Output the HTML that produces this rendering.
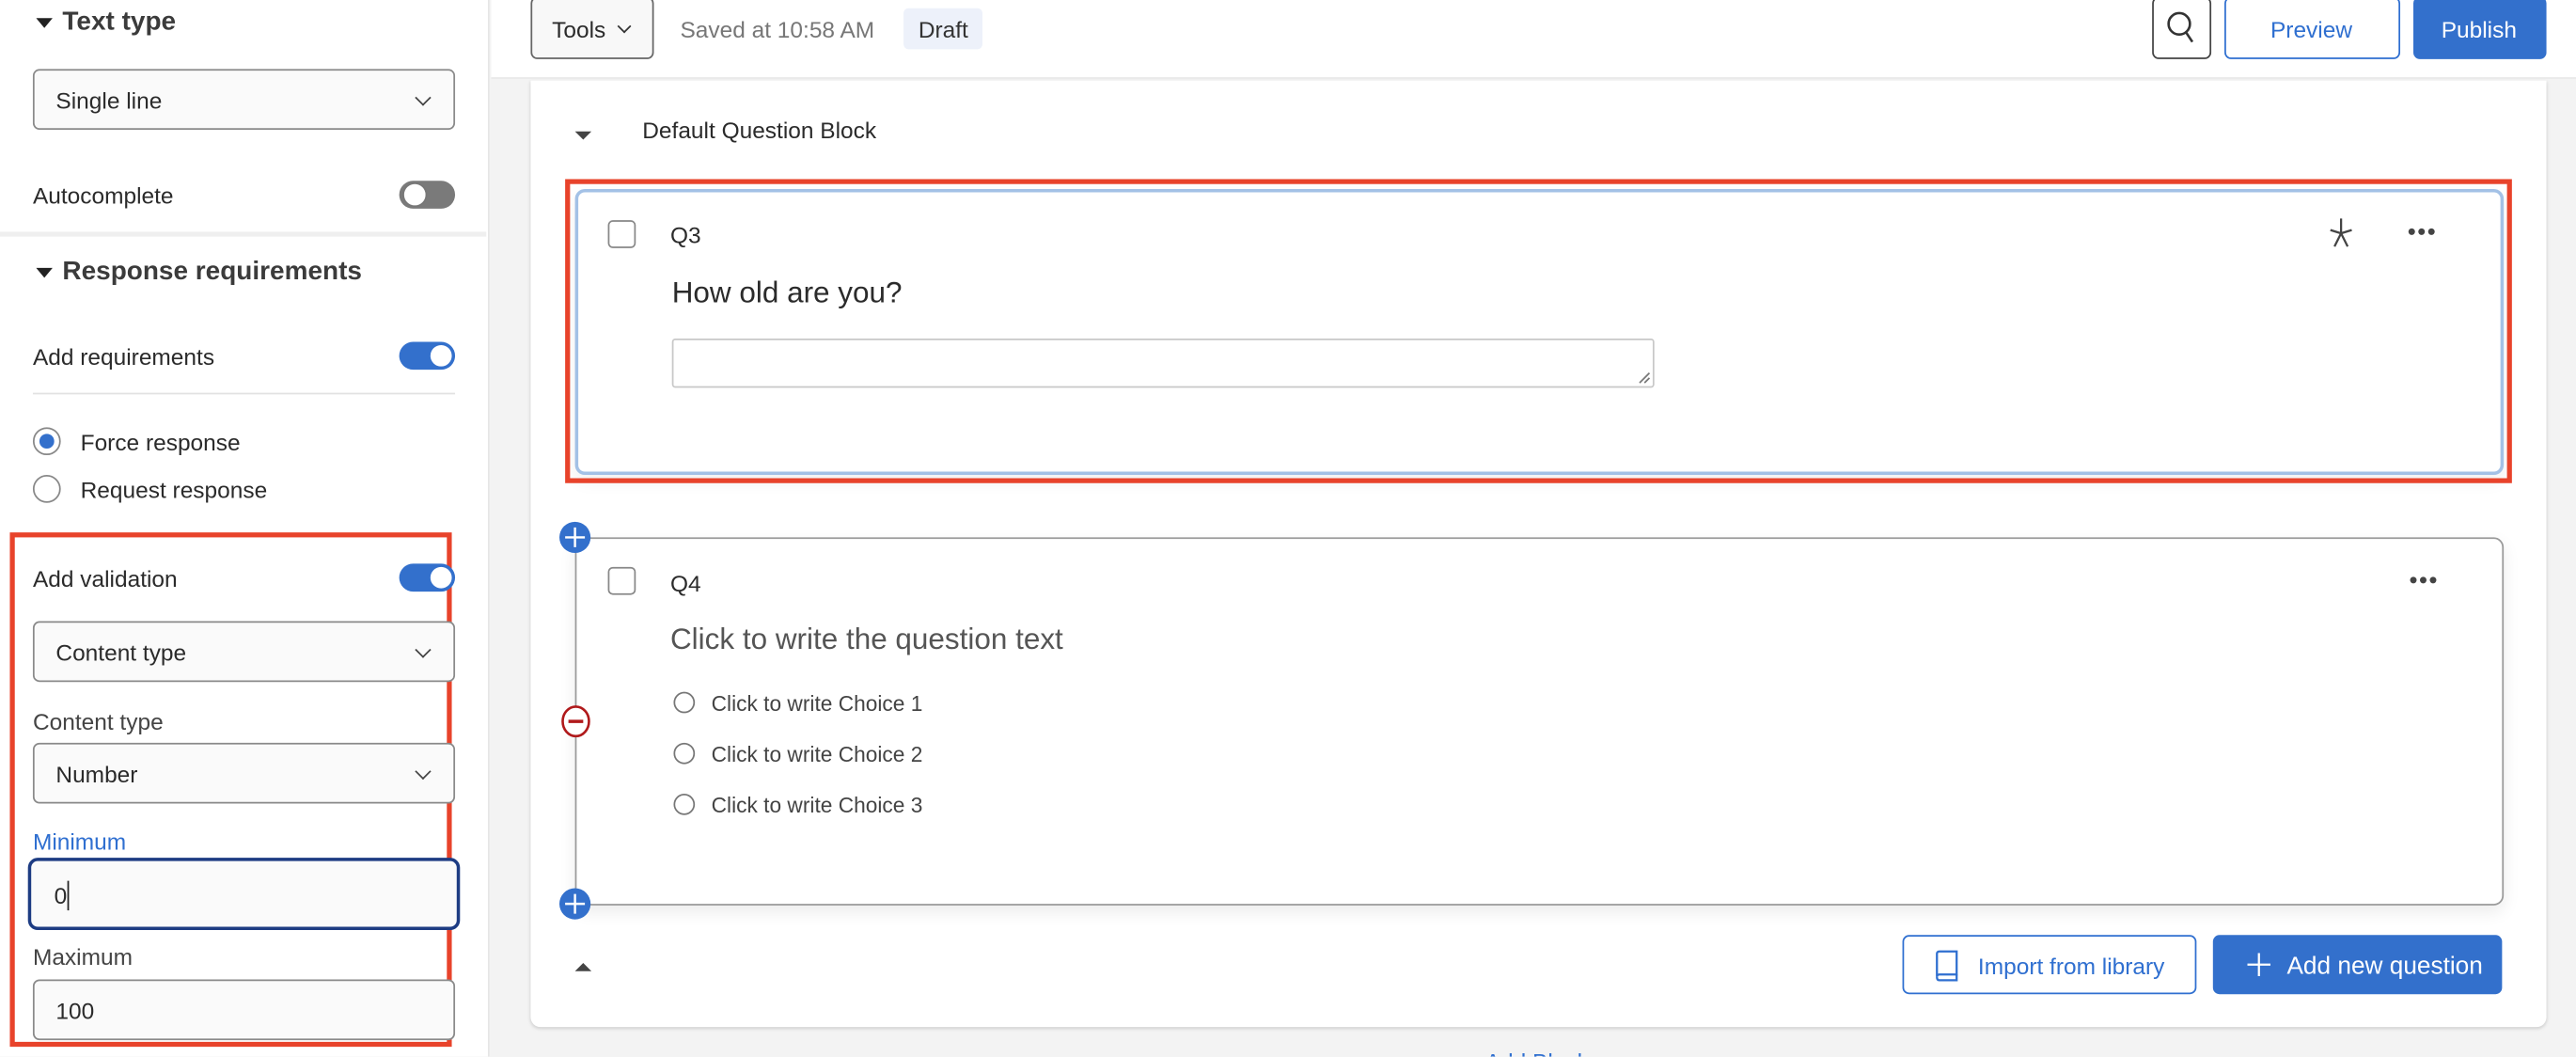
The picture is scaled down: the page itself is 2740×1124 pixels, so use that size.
<!DOCTYPE html>
<html><head><meta charset="utf-8">
<style>
*{box-sizing:border-box;margin:0;padding:0}
html,body{width:2740px;height:1124px;overflow:hidden;background:#f3f3f3;font-family:"Liberation Sans",Arial,sans-serif;color:#333}
#w{position:absolute;left:0;top:0;width:1568px;height:643px;transform:scale(1.74745);transform-origin:0 0;overflow:hidden;background:#f3f3f3}
.a{position:absolute}
.t{position:absolute;white-space:nowrap;line-height:1;transform:translateY(-50%)}
.sel{position:absolute;background:#fafafa;border:1px solid #8a8a8a;border-radius:4px}
.sel span{position:absolute;left:13px;top:50%;transform:translateY(-50%);font-size:14px;color:#2b2b2b}
.chev{position:absolute;right:15px;top:50%;width:7px;height:7px;margin-top:-5px;border-right:1.2px solid #444;border-bottom:1.2px solid #444;transform:rotate(45deg)}
.tog{position:absolute;width:34px;height:17px;border-radius:9px}
.tog i{position:absolute;top:2px;width:13px;height:13px;border-radius:50%;background:#fff}
.on{background:#3370cc}.on i{right:2px}
.off{background:#7a7a7a}.off i{left:2px;top:1px;width:15px;height:15px;border:1px solid #777}
.rad{position:absolute;width:17px;height:17px;border-radius:50%;border:1px solid #888;background:#fff}
.cb{position:absolute;width:17px;height:17px;border:1px solid #888;border-radius:3px;background:#fff}
.cr{position:absolute;width:13px;height:13px;border-radius:50%;border:1px solid #777;background:#fff}
.dots{position:absolute;width:18px;height:4px}
.dots b{position:absolute;top:0;width:4px;height:4px;border-radius:50%;background:#444}
</style></head><body><div id="w">

<div class="a" style="left:0;top:0;width:298px;height:643px;background:#fff;border-right:1px solid #e6e6e6"></div>
<div class="a" style="left:22px;top:11px;width:0;height:0;border-left:5px solid transparent;border-right:5px solid transparent;border-top:6px solid #222"></div>
<div class="t" style="left:38px;top:14px;font-size:16px;font-weight:bold;color:#3b3b3b">Text type</div>
<div class="sel" style="left:20px;top:42px;width:257px;height:37px"><span>Single line</span><div class="chev"></div></div>
<div class="t" style="left:20px;top:119px;font-size:14px;color:#2b2b2b">Autocomplete</div>
<div class="tog off" style="left:243px;top:110px"><i></i></div>
<div class="a" style="left:0;top:141px;width:296px;height:3px;background:#efefef"></div>
<div class="a" style="left:22px;top:163px;width:0;height:0;border-left:5px solid transparent;border-right:5px solid transparent;border-top:6px solid #222"></div>
<div class="t" style="left:38px;top:166px;font-size:16px;font-weight:bold;color:#3b3b3b">Response requirements</div>
<div class="t" style="left:20px;top:217px;font-size:14px;color:#2b2b2b">Add requirements</div>
<div class="tog on" style="left:243px;top:208px"><i></i></div>
<div class="a" style="left:20px;top:239px;width:257px;height:1px;background:#e2e2e2"></div>
<div class="rad" style="left:20px;top:260px"></div>
<div class="a" style="left:24px;top:264px;width:9px;height:9px;border-radius:50%;background:#3370cc"></div>
<div class="t" style="left:49px;top:269px;font-size:14px;color:#2b2b2b">Force response</div>
<div class="rad" style="left:20px;top:289px"></div>
<div class="t" style="left:49px;top:298px;font-size:14px;color:#2b2b2b">Request response</div>

<div class="a" style="left:6px;top:324px;width:269px;height:313px;border:3px solid #e8432b"></div>
<div class="t" style="left:20px;top:352px;font-size:14px;color:#2b2b2b">Add validation</div>
<div class="tog on" style="left:243px;top:343px"><i></i></div>
<div class="sel" style="left:20px;top:378px;width:257px;height:37px"><span>Content type</span><div class="chev"></div></div>
<div class="t" style="left:20px;top:439px;font-size:14px;color:#444">Content type</div>
<div class="sel" style="left:20px;top:452px;width:257px;height:37px"><span>Number</span><div class="chev"></div></div>
<div class="t" style="left:20px;top:512px;font-size:14px;color:#2f6fd0">Minimum</div>
<div class="a" style="left:17px;top:522px;width:263px;height:44px;border:2px solid #1d3c83;border-radius:6px;background:#fafafa"></div>
<div class="t" style="left:33px;top:545px;font-size:14px;color:#2b2b2b">0</div>
<div class="a" style="left:41px;top:536px;width:1px;height:18px;background:#222"></div>
<div class="t" style="left:20px;top:582px;font-size:14px;color:#444">Maximum</div>
<div class="sel" style="left:20px;top:596px;width:257px;height:37px"><span>100</span></div>

<div class="a" style="left:299px;top:0;width:1269px;height:48px;background:#fff;border-bottom:1px solid #e8e8e8"></div>
<div class="a" style="left:323px;top:-2px;width:75px;height:38px;border:1px solid #666;border-radius:4px;background:#f8f8f8"></div>
<div class="t" style="left:336px;top:18px;font-size:14px;color:#2b2b2b">Tools</div>
<div class="a" style="left:377px;top:13px;width:6px;height:6px;border-right:1.2px solid #333;border-bottom:1.2px solid #333;transform:rotate(45deg)"></div>
<div class="t" style="left:414px;top:18px;font-size:14px;color:#777">Saved at 10:58 AM</div>
<div class="a" style="left:550px;top:5px;width:48px;height:25px;background:#edf1fa;border-radius:3px"></div>
<div class="t" style="left:559px;top:18px;font-size:14px;color:#333">Draft</div>
<div class="a" style="left:1310px;top:-2px;width:36px;height:38px;border:1px solid #444;border-radius:4px;background:#fff"></div>
<svg class="a" style="left:1317px;top:6px" width="22" height="22" viewBox="0 0 22 22"><circle cx="9.5" cy="8.5" r="6.5" fill="none" stroke="#333" stroke-width="1.5"/><line x1="13.5" y1="13.5" x2="17.5" y2="19.5" stroke="#333" stroke-width="1.5"/></svg>
<div class="a" style="left:1354px;top:-2px;width:107px;height:38px;border:1px solid #2f6fd0;border-radius:4px;background:#fff"></div>
<div class="t" style="left:1382px;top:18px;font-size:14px;color:#2f6fd0">Preview</div>
<div class="a" style="left:1469px;top:-2px;width:81px;height:38px;border-radius:4px;background:#3370cc"></div>
<div class="t" style="left:1486px;top:18px;font-size:14px;color:#fff">Publish</div>

<div class="a" style="left:323px;top:49px;width:1227px;height:576px;background:#fff;border-radius:0 0 6px 6px;box-shadow:0 1px 2px rgba(0,0,0,.15)"></div>
<div class="a" style="left:350px;top:80px;width:0;height:0;border-left:5px solid transparent;border-right:5px solid transparent;border-top:5px solid #444"></div>
<div class="t" style="left:391px;top:79px;font-size:14px;color:#2b2b2b">Default Question Block</div>

<div class="a" style="left:350px;top:115px;width:1174px;height:174px;border:2px solid #a3c1e6;border-radius:6px;background:#fff;box-shadow:0 4px 10px rgba(0,0,0,.06)"></div>
<div class="a" style="left:344px;top:109px;width:1185px;height:185px;border:3px solid #e8432b"></div>
<div class="cb" style="left:370px;top:134px"></div>
<div class="t" style="left:408px;top:143px;font-size:14px;color:#2b2b2b">Q3</div>
<svg class="a" style="left:1415px;top:132px" width="20" height="20" viewBox="0 0 20 20"><g stroke="#444" stroke-width="1.3" fill="none"><line x1="10" y1="1" x2="10" y2="10"/><line x1="3.5" y1="8" x2="10" y2="10"/><line x1="16.5" y1="8" x2="10" y2="10"/><line x1="10" y1="10" x2="6" y2="18"/><line x1="10" y1="10" x2="14" y2="18"/></g></svg>
<div class="dots" style="left:1466px;top:139px"><b style="left:0"></b><b style="left:6px"></b><b style="left:12px"></b></div>
<div class="t" style="left:409px;top:178px;font-size:18px;color:#2b2b2b">How old are you?</div>
<div class="a" style="left:409px;top:206px;width:598px;height:30px;border:1px solid #c8c8c8;border-radius:2px"></div>
<svg class="a" style="left:997px;top:226px" width="8" height="8" viewBox="0 0 8 8"><g stroke="#777" stroke-width="1"><line x1="1" y1="7" x2="7" y2="1"/><line x1="4" y1="7" x2="7" y2="4"/></g></svg>

<div class="a" style="left:350px;top:327px;width:1174px;height:224px;border:1px solid #9a9a9a;border-radius:6px;background:#fff;box-shadow:0 4px 10px rgba(0,0,0,.08)"></div>
<div class="cb" style="left:370px;top:345px"></div>
<div class="t" style="left:408px;top:355px;font-size:14px;color:#2b2b2b">Q4</div>
<div class="dots" style="left:1467px;top:351px"><b style="left:0"></b><b style="left:6px"></b><b style="left:12px"></b></div>
<div class="t" style="left:408px;top:389px;font-size:18px;color:#555">Click to write the question text</div>
<div class="cr" style="left:410px;top:421px"></div>
<div class="t" style="left:433px;top:428px;font-size:13px;color:#444">Click to write Choice 1</div>
<div class="cr" style="left:410px;top:452px"></div>
<div class="t" style="left:433px;top:459px;font-size:13px;color:#444">Click to write Choice 2</div>
<div class="cr" style="left:410px;top:483px"></div>
<div class="t" style="left:433px;top:490px;font-size:13px;color:#444">Click to write Choice 3</div>
<svg class="a" style="left:340px;top:317px" width="20" height="20" viewBox="0 0 20 20"><circle cx="10" cy="10" r="9.5" fill="#3370cc"/><g stroke="#fff" stroke-width="1.4"><line x1="10" y1="4" x2="10" y2="16"/><line x1="4" y1="10" x2="16" y2="10"/></g></svg>
<svg class="a" style="left:340px;top:540px" width="20" height="20" viewBox="0 0 20 20"><circle cx="10" cy="10" r="9.5" fill="#3370cc"/><g stroke="#fff" stroke-width="1.4"><line x1="10" y1="4" x2="10" y2="16"/><line x1="4" y1="10" x2="16" y2="10"/></g></svg>
<svg class="a" style="left:341px;top:429px" width="19" height="20" viewBox="0 0 19 20"><ellipse cx="9.5" cy="10" rx="8" ry="9" fill="#fff" stroke="#b0191b" stroke-width="1.5"/><line x1="5" y1="10" x2="14" y2="10" stroke="#b0191b" stroke-width="2"/></svg>

<div class="a" style="left:350px;top:586px;width:0;height:0;border-left:5px solid transparent;border-right:5px solid transparent;border-bottom:5px solid #444"></div>
<div class="a" style="left:1158px;top:569px;width:179px;height:36px;border:1px solid #2f6fd0;border-radius:4px;background:#fff"></div>
<svg class="a" style="left:1177px;top:578px" width="16" height="20" viewBox="0 0 16 20"><g fill="none" stroke="#2f6fd0" stroke-width="1.3"><path d="M2 2.5 Q2 1 3.5 1 H14 V15 H3.5 Q2 15 2 16.5 V2.5 Z"/><path d="M2 16.5 Q2 18.5 3.5 18.5 H14 V15"/></g></svg>
<div class="t" style="left:1204px;top:588px;font-size:14px;color:#2f6fd0">Import from library</div>
<div class="a" style="left:1347px;top:569px;width:176px;height:36px;border-radius:4px;background:#3370cc"></div>
<svg class="a" style="left:1367px;top:579px" width="16" height="16" viewBox="0 0 16 16"><g stroke="#fff" stroke-width="1.3"><line x1="8" y1="1" x2="8" y2="15"/><line x1="1" y1="8" x2="15" y2="8"/></g></svg>
<div class="t" style="left:1392px;top:588px;font-size:15px;color:#fff">Add new question</div>

<div class="t" style="left:904px;top:646px;font-size:14px;color:#2f6fd0">Add Block</div>
</div></body></html>
